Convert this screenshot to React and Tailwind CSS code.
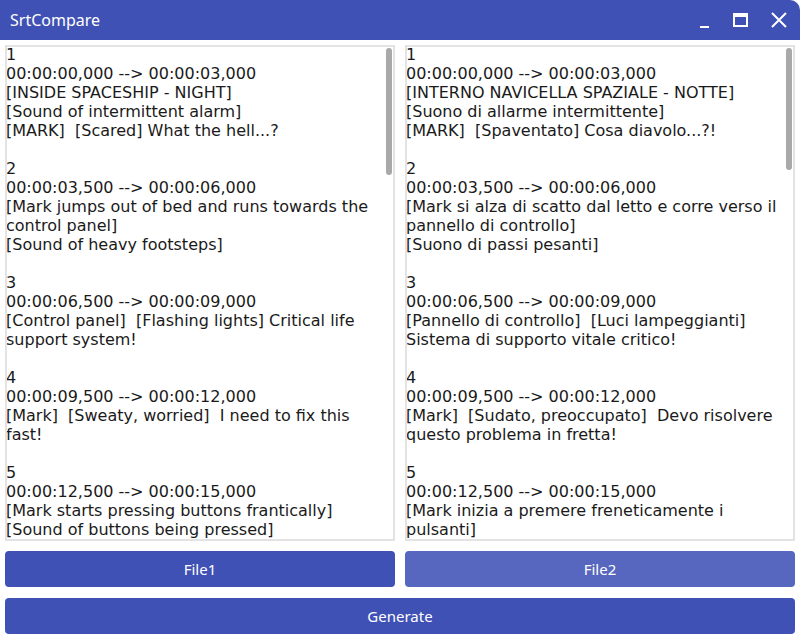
import React from "react";

const left = `1
00:00:00,000 --> 00:00:03,000
[INSIDE SPACESHIP - NIGHT]
[Sound of intermittent alarm]
[MARK]  [Scared] What the hell...?

2
00:00:03,500 --> 00:00:06,000
[Mark jumps out of bed and runs towards the control panel]
[Sound of heavy footsteps]

3
00:00:06,500 --> 00:00:09,000
[Control panel]  [Flashing lights] Critical life support system!

4
00:00:09,500 --> 00:00:12,000
[Mark]  [Sweaty, worried]  I need to fix this fast!

5
00:00:12,500 --> 00:00:15,000
[Mark starts pressing buttons frantically]
[Sound of buttons being pressed]
`;

const right = `1
00:00:00,000 --> 00:00:03,000
[INTERNO NAVICELLA SPAZIALE - NOTTE]
[Suono di allarme intermittente]
[MARK]  [Spaventato] Cosa diavolo...?!

2
00:00:03,500 --> 00:00:06,000
[Mark si alza di scatto dal letto e corre verso il pannello di controllo]
[Suono di passi pesanti]

3
00:00:06,500 --> 00:00:09,000
[Pannello di controllo]  [Luci lampeggianti] Sistema di supporto vitale critico!

4
00:00:09,500 --> 00:00:12,000
[Mark]  [Sudato, preoccupato]  Devo risolvere questo problema in fretta!

5
00:00:12,500 --> 00:00:15,000
[Mark inizia a premere freneticamente i pulsanti]
[Suono di pulsanti premuti]
`;

// text pane with a fake scrollbar thumb
function SubPane({ text, thumb }) {
  return (
    <div className="relative h-[496px] border-2 border-[#e3e3e3] bg-white overflow-hidden">
      <div className="-mt-[2px] -ml-[1px] pr-[10px] whitespace-pre-wrap text-[16px] leading-[19px] text-[#1a1a1a] font-['DejaVu_Sans',sans-serif]">
        {text}
      </div>
      <div className={`absolute right-[1px] top-[1px] w-[6px] rounded-full bg-[#a9a9a9] ${thumb}`}></div>
    </div>
  );
}

export default function App() {
  return (
    <div className="w-[800px] h-[640px] bg-white flex flex-col font-['Noto_Sans',sans-serif]">
      {/* title bar */}
      <div className="h-[40px] bg-[#3f51b5] rounded-tr-[10px] flex items-center text-white">
        <div className="pl-[10px] text-[16px]">SrtCompare</div>
        <div className="ml-auto flex items-center">
          <div className="w-[36px] h-[40px] flex items-center justify-center">
            <div className="w-[9px] h-[2px] bg-white mt-[13px]"></div>
          </div>
          <div className="w-[36px] h-[40px] flex items-center justify-center">
            <div className="w-[15px] h-[14px] border-2 border-t-[4px] border-white"></div>
          </div>
          <div className="w-[42px] h-[40px] flex items-center justify-center">
            <svg width="16" height="16" viewBox="0 0 16 16">
              <path d="M1 1L15 15M15 1L1 15" stroke="white" strokeWidth="2" />
            </svg>
          </div>
        </div>
      </div>

      <div className="flex-1 flex flex-col px-[5px] pt-[5px] pb-[6px]">
        <div className="grid grid-cols-2 gap-[10px]">
          <SubPane text={left} thumb="h-[127px]" />
          <SubPane text={right} thumb="h-[122px]" />
        </div>
        <div className="grid grid-cols-2 gap-[10px] mt-[10px]">
          <button className="h-[36px] rounded-[4px] bg-[#3f51b5] text-white text-[15px]">File1</button>
          <button className="h-[36px] rounded-[4px] bg-[#5767bf] text-white text-[15px]">File2</button>
        </div>
        <button className="mt-[11px] h-[36px] rounded-[4px] bg-[#3f51b5] text-white text-[15px]">Generate</button>
      </div>
    </div>
  );
}
